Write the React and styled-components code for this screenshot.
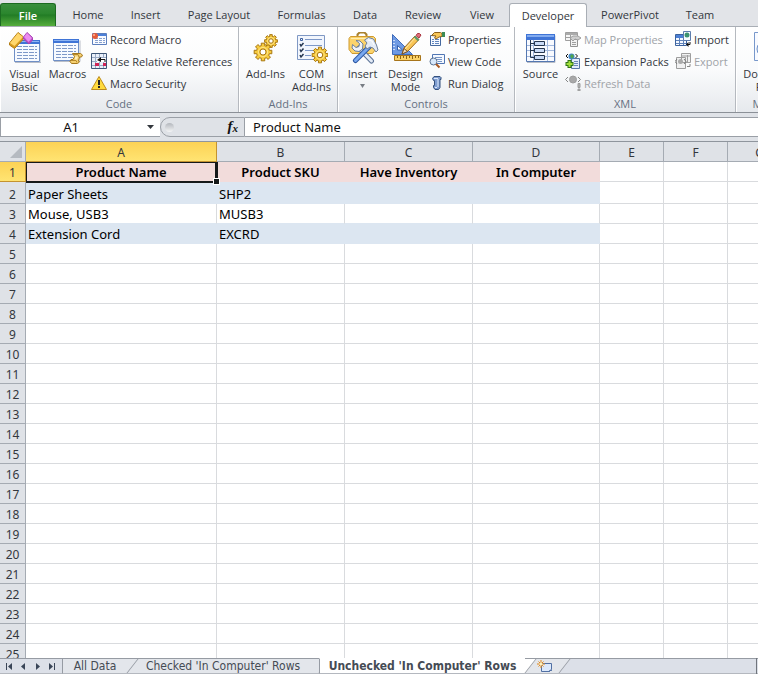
import styled, { createGlobalStyle, css } from "styled-components";

const GlobalStyle = createGlobalStyle`
  * {
    box-sizing: border-box;
  }
  body {
    margin: 0;
    overflow: hidden;
    background: #dfe2e7;
  }
  button,
  input {
    font: inherit;
    color: inherit;
    border: none;
    outline: none;
    padding: 0;
    margin: 0;
    background: transparent;
    border-radius: 0;
  }
`;

const Window = styled.div`
  height: 100vh;
  display: flex;
  flex-direction: column;
  overflow: hidden;
  font-family: "Open Sans", "Noto Sans", sans-serif;
  font-size: 11px;
  color: #33373d;
`;

/* ribbon tabs */

const TabBar = styled.nav`
  flex: none;
  height: 27px;
  display: flex;
  align-items: flex-end;
  background: #e2e4e8;
  border-bottom: 1px solid #a9aeb5;
  white-space: nowrap;
`;

const FileTab = styled.button`
  width: 56px;
  height: 23px;
  margin-right: 3px;
  border: 1px solid #1c6b21;
  border-bottom: none;
  border-radius: 3px 3px 0 0;
  background: linear-gradient(#3a8f3e, #2a862d 45%, #227c25 50%, #55ad3c);
  color: #fff;
  font-weight: 600;
`;

const Tab = styled.button`
  width: ${(props) => props.$width}px;
  height: 23px;
  flex: none;
  text-align: center;
  ${(props) =>
    props.$active &&
    css`
      height: 24px;
      margin-bottom: -1px;
      background: #fff;
      border: 1px solid #a9aeb5;
      border-bottom: none;
      border-radius: 3px 3px 0 0;
    `}
`;

/* ribbon body */

const RibbonBody = styled.div`
  flex: none;
  height: 86px;
  display: flex;
  overflow: hidden;
  background: linear-gradient(#fff, #fafbfc 50%, #e6e9ed);
  border-bottom: 1px solid #8b9097;
`;

const GroupBox = styled.section`
  width: ${(props) => props.$width}px;
  flex: none;
  display: flex;
  flex-direction: column;
  border-right: 1px solid #b5b9bf;
  box-shadow: inset 1px 0 0 #fff;
`;

const GroupItems = styled.div`
  height: 69px;
  padding: 1px 0 0 3px;
  display: flex;
  align-items: flex-start;
`;

const GroupLabel = styled.div`
  line-height: 16px;
  text-align: center;
  color: #667082;
`;

const BigButtonBox = styled.button`
  width: ${(props) => props.$width}px;
  flex: none;
  padding-top: 4px;
  display: flex;
  flex-direction: column;
  align-items: center;
  line-height: 13px;
  white-space: nowrap;

  svg {
    margin-bottom: 3px;
  }
`;

const SmallColumn = styled.div`
  width: ${(props) => props.$width}px;
  flex: none;
  padding-left: 2px;
`;

const SmallButton = styled.button`
  height: 22px;
  display: flex;
  align-items: center;
  gap: 3px;
  white-space: nowrap;

  &:disabled {
    color: #a0a3a8;
  }
  &:disabled svg {
    filter: grayscale(1);
    opacity: 0.7;
  }
`;

/* formula bar */

const FormulaBar = styled.div`
  flex: none;
  height: 29px;
  padding: 4px 0;
  display: flex;
  background: #dfe2e7;
  border-bottom: 1px solid #8f959d;
  font-family: "Noto Sans", sans-serif;
  font-size: 13px;
  color: #111;
`;

const NameBox = styled.div`
  width: 160px;
  flex: none;
  display: flex;
  background: #fff;
  border: 1px solid #9a9fa6;
  border-right: none;
`;

const NameInput = styled.input`
  width: 140px;
  text-align: center;
`;

const NameArrow = styled.button`
  width: 18px;
  display: flex;
  align-items: center;
  justify-content: center;
`;

const FunctionArea = styled.div`
  width: 85px;
  flex: none;
  display: flex;
  align-items: center;
  justify-content: space-between;
  padding: 0 6px 0 4px;
  background: #dfe2e7;
  border: 1px solid #9a9fa6;
  border-radius: 10px 0 0 10px;
`;

const Knob = styled.span`
  width: 9px;
  height: 9px;
  border-radius: 50%;
  background: linear-gradient(#b3b7bd, #f4f5f6);
`;

const FxButton = styled.button`
  font-family: "Liberation Serif", serif;
  font-size: 15px;
  font-style: italic;
  font-weight: bold;
  line-height: 18px;

  sub {
    font-size: 11px;
    vertical-align: -1px;
  }
`;

const FormulaInput = styled.input`
  flex: 1;
  min-width: 0;
  padding-left: 8px;
  background: #fff;
  border: 1px solid #9a9fa6;
  border-width: 1px 0;
`;

/* grid */

const GridArea = styled.main`
  flex: 1;
  min-height: 0;
  overflow: hidden;
  background: #fff;
`;

const Grid = styled.table`
  width: 792px;
  table-layout: fixed;
  border-collapse: separate;
  border-spacing: 0;
  font-family: "Noto Sans", sans-serif;
  font-size: 13px;
  line-height: 17px;
  color: #000;
`;

const Row = styled.tr`
  height: ${(props) => props.$height || 20}px;
`;

const HeadCell = styled.th`
  padding: 0;
  font-size: 12px;
  font-weight: normal;
  text-align: center;
  vertical-align: bottom;
  color: #33373d;
  background: #dfe2e7;
  border-right: 1px solid #a5abb3;
  border-bottom: 1px solid #a5abb3;
  ${(props) =>
    props.$selected &&
    css`
      background: linear-gradient(#fcd255, #ffe472);
      border-color: #c4932f;
    `}
`;

const Corner = styled(HeadCell)`
  svg {
    display: block;
    margin: 0 3px 3px auto;
  }
`;

const Cell = styled.td`
  position: relative;
  padding: 0 2px;
  white-space: nowrap;
  vertical-align: bottom;
  font-weight: ${(props) => (props.$bold ? 600 : 400)};
  text-align: ${(props) => (props.$bold ? "center" : "left")};
  background: ${(props) => props.$fill || "#fff"};
  border-right: 1px solid ${(props) => props.$fill || "#d9dbde"};
  border-bottom: 1px solid ${(props) => props.$line || props.$fill || "#d9dbde"};
`;

const Selection = styled.span`
  position: absolute;
  inset: 0 -2px -2px 0;
  z-index: 1;
  border: 1px solid #15191a;
  border-width: 1px 3px 2px 1px;

  &::after {
    content: "";
    position: absolute;
    right: -4px;
    bottom: -3px;
    width: 5px;
    height: 5px;
    background: #15191a;
    outline: 1px solid #fff;
  }
`;

/* sheet tabs */

const SheetBar = styled.footer`
  position: relative;
  z-index: 0;
  flex: none;
  height: 16px;
  display: flex;
  overflow: hidden;
  background: #dce0e8;
  font-family: "DejaVu Sans Condensed", "DejaVu Sans", sans-serif;
  font-size: 12px;
  color: #454b54;
  box-shadow: inset 0 1px 0 #969ba3, inset 0 -1px 0 #b4b8bf;
`;

const SheetNav = styled.div`
  width: 62px;
  flex: none;
  display: flex;
  align-items: center;
  justify-content: space-between;
  padding: 0 5px;
`;

const NavButton = styled.button`
  display: flex;
`;

const SheetTab = styled.button`
  position: relative;
  z-index: ${(props) => (props.$active ? 4 : props.$level)};
  width: ${(props) => props.$width}px;
  height: 16px;
  flex: none;
  line-height: 15px;
  white-space: nowrap;
  background: ${(props) => (props.$active ? "#fff" : "#e3e6eb")};
  border-left: 1px solid #969ba3;
  border-top: 1px solid ${(props) => (props.$active ? "#fff" : "#969ba3")};
  border-bottom: 1px solid #b4b8bf;
  font-weight: ${(props) => (props.$active ? "bold" : "normal")};
  ${(props) => props.$joined && "border-left: none;"}

  &::after {
    content: "";
    position: absolute;
    z-index: -1;
    top: 0;
    bottom: 0;
    right: -6px;
    width: 16px;
    background: inherit;
    border-right: 1px solid #969ba3;
    transform: skewX(-38deg);
  }
`;

const NewSheetTab = styled(SheetTab)`
  padding-left: 5px;

  svg {
    display: block;
    margin: 0 auto;
  }
`;

const Splitter = styled.span`
  width: 2px;
  margin-left: auto;
  border-left: 1px solid #70757c;
`;

/* icons */

const SheetLines = ({ x, y, w, h, step = 3 }) => {
  const lines = [];
  for (let i = y; i < y + h; i += step) {
    lines.push(`M${x} ${i}h${w}`);
  }
  return <path d={lines.join("")} stroke="#7d98c8" strokeDasharray="5 1" />;
};

// eight-toothed wheel, r is the radius to the tip of a tooth
const Gear = ({ cx, cy, r }) => {
  const inner = r * 0.74;
  const points = [];
  for (let i = 0; i < 8; i++) {
    const a = (i * Math.PI) / 4;
    [
      [a - 0.24, inner],
      [a - 0.2, r],
      [a + 0.2, r],
      [a + 0.24, inner],
    ].forEach(([t, d]) => {
      points.push(`${cx + d * Math.cos(t)},${cy + d * Math.sin(t)}`);
    });
  }
  return (
    <g>
      <polygon
        points={points.join(" ")}
        fill="#f7cb3e"
        stroke="#a8760f"
        strokeLinejoin="round"
      />
      <circle cx={cx} cy={cy} r={r * 0.52} fill="none" stroke="#ffe58a" />
      <circle cx={cx} cy={cy} r={r * 0.34} fill="#fff" stroke="#a8760f" />
    </g>
  );
};

const VisualBasicIcon = () => (
  <svg width="32" height="32" fill="none">
    <path d="M6 30.5h26v-21" stroke="#b9bec8" />
    <path d="M5.5 8.500h25v21h-25z" fill="#f7faff" stroke="#6f8fc6" />
    <path d="M5 8h26v4H5z" fill="#3f74d6" />
    <path d="M6 9h24v1H6z" fill="#8db4f3" />
    <SheetLines x={8} y={14.5} w={20} h={14} />
    <path d="M.5 11 9 .5l5 4v3L5.500 16.500.500 13z" fill="#d99c1c" stroke="#b27c14" />
    <path d="M1 11 9 1l5 4-8.500 9z" fill="#ffd76c" />
    <path d="M14.500 5 18 .5l5.500 5v2.500L20 12l-5.500-5z" fill="#b94cc8" stroke="#a845b5" />
    <path d="M15 5l3-4 5 5-3.500 4z" fill="#eb8df0" />
  </svg>
);

const MacrosIcon = () => (
  <svg width="32" height="32" fill="none">
    <path d="M2 29.500h26v-21" stroke="#b9bec8" />
    <path d="M1.500 7.500h25v21h-25z" fill="#f7faff" stroke="#6f8fc6" />
    <path d="M1 7h26v4H1z" fill="#3f74d6" />
    <path d="M2 8h24v1H2z" fill="#8db4f3" />
    <SheetLines x={4} y={13.500} w={20} h={14} />
    <path
      d="M20.500 21.500h8l2 1.500-1 2h-2l-1 4 1 1-2 1.500h-6l-1.500-2 1-2h2l1.500-3z"
      fill="#f5d071"
      stroke="#a6781c"
    />
    <path d="M21 22.500h5l1 2.500M19 28.500h5l1 2" stroke="#b78a2b" />
    <path d="M23 24.500h3l-1 3h-2z" fill="#fff0bd" />
  </svg>
);

const AddInsIcon = () => (
  <svg width="32" height="32">
    <Gear cx={21} cy={9} r={6.5} />
    <Gear cx={13} cy={20} r={9} />
  </svg>
);

const ComAddInsIcon = () => (
  <svg width="32" height="32" fill="none">
    <path d="M1.500 3.500h27v24h-27z" fill="#f2f6fd" stroke="#7f98c4" />
    <path d="M9 7.500h17M9 13.500h17M9 18.500h10M9 23.500h6" stroke="#7d98c8" />
    <path d="M4.500 6.500h2v2h-2z" stroke="#3b5f9d" />
    <path
      d="m4 12 1 2 2.500-3M4 17.500l1 2 2.500-3M4 23l1 2 2.500-3"
      stroke="#24354f"
      strokeWidth="1.500"
    />
    <Gear cx={24} cy={23} r={8} />
  </svg>
);

const InsertIcon = () => (
  <svg width="32" height="32" fill="none">
    <path d="M10.500 5V2.500l2-2h5l2 2V5" stroke="#a9822f" strokeWidth="2" />
    <path
      d="M3.500 4.500h23l2 2v11l-3 4H5l-3-4v-11z"
      fill="#fbd36b"
      stroke="#cf9a2e"
    />
    <path d="M4 6.500h23" stroke="#ffedb0" />
    <path d="M12 16 24.500 29" stroke="#5a7195" strokeWidth="5" strokeLinecap="round" />
    <path d="M12 16 24.500 29" stroke="#e4ecf7" strokeWidth="3" strokeLinecap="round" />
    <path
      d="M5.500 12.500 9 15.500l3-1 .500-3-3.500-3 4 .5 3 3-.5 5-3.500 2.500-4-.5-3-3z"
      fill="#edf2f9"
      stroke="#6c7f9c"
    />
    <path d="M22 15 8.500 28.500" stroke="#2b57a4" strokeWidth="5" strokeLinecap="round" />
    <path d="M22 15 8.500 28.500" stroke="#79a8ef" strokeWidth="3" strokeLinecap="round" />
    <path
      d="m17.500 8 4-2.500 5 1.500 3 6 1.500 5-2 2-3-4-3-1-3 2-2-3 2-3z"
      fill="#e4ebf5"
      stroke="#6c7e98"
    />
    <path d="m21 8 4 1 2 4" stroke="#fff" />
  </svg>
);

const DesignIcon = () => (
  <svg width="32" height="32" fill="none">
    <path d="M2.500 2.500v20h20z" fill="#6f9ae3" stroke="#3f6cbb" />
    <path d="M7.500 13.500v4.500h5z" fill="#fff" stroke="#3560ad" />
    <path d="M3 8.500h2M3 11.500h2M3 14.500h2M3 17.500h2" stroke="#c9dbfb" />
    <path d="M4.500 23.500h26v5h-26z" fill="#fbd267" stroke="#a8751b" />
    <path
      d="M7.500 24v2M10.500 24v3M13.500 24v2M16.500 24v3M19.500 24v2M22.500 24v3M25.500 24v2M28.500 24v2"
      stroke="#8d6213"
    />
    <path d="m12 22 2-6L25 4l4 3.500L18 19z" fill="#f9c656" stroke="#9a6a20" />
    <path d="m15 17 11-12" stroke="#ffe9a8" />
    <path d="m12 22 2-5.500 3.500 3z" fill="#f6dfb9" stroke="#745028" />
    <path d="m24.500 4.500 4 4" stroke="#5a9a6b" strokeWidth="2" />
    <path d="m26 3.500 1.500-2h2L31 3l-2 3z" fill="#e2707a" stroke="#a9343f" />
  </svg>
);

const SourceIcon = () => (
  <svg width="32" height="32" fill="none">
    <path d="M2 30.500h28v-27" stroke="#b9bec8" />
    <path d="M1.500 2.500h28v27h-28z" fill="#f8faff" stroke="#5477b1" />
    <path d="M1 2h29v6H1z" fill="#3f74d6" />
    <path d="M2 3h27v2H2z" fill="#82abef" />
    <path
      d="M2 13.500h27M2 18.500h27M2 24.500h27M8.500 8v21M22.500 8v21"
      stroke="#a3b9de"
    />
    <path d="M5.500 8v17.500h4M5.500 11.500h4M5.500 18.500h4" stroke="#25364f" />
    <path
      d="M9.500 9.500h10v4h-10zM9.500 16.500h10v4h-10zM9.500 23.500h10v4h-10z"
      fill="#c9daf6"
      stroke="#25364f"
    />
  </svg>
);

const DocumentIcon = () => (
  <svg width="32" height="32" fill="none">
    <path d="M.5.5h28v28H.5z" fill="#f8faff" stroke="#7898cb" />
    <circle cx="11" cy="17" r="8" fill="#dce9fb" stroke="#6b8fc8" />
  </svg>
);

const RecordIcon = () => (
  <svg width="16" height="16" fill="none">
    <path d="M1.500 2.500h14v11h-14z" fill="#f9fbff" stroke="#5c7fbd" />
    <path d="M2 3h13v2H2z" fill="#4d80d8" />
    <path
      d="M4 7.500h10M4 9.500h10M4 11.500h10"
      stroke="#87a1cf"
      strokeDasharray="3 1"
    />
    <circle cx="4" cy="5" r="3" fill="#e55b3a" />
    <circle cx="3" cy="4" r="1" fill="#ffb59b" />
  </svg>
);

const RelativeIcon = () => (
  <svg width="16" height="16" fill="none">
    <path d="M.5.5h15v15H.5z" fill="#eaf0fa" stroke="#3f5777" />
    <path
      d="M1 4.500h14M1 8.500h14M1 12.500h14M4.500 1v14M8.500 1v14M12.500 1v14"
      stroke="#9aabc5"
    />
    <path d="M4 10h4v3H4zM12 10h3v3h-3z" fill="#d02456" />
    <path d="M6 5h9v4H6z" fill="#fff" />
    <path d="M14 9V6.500H9" stroke="#111" />
    <path d="m6 7 4-3v5z" fill="#111" />
  </svg>
);

const WarningIcon = () => (
  <svg width="16" height="16" fill="none">
    <path
      d="M8 1.500 15.500 14.500H.5z"
      fill="#ffda3d"
      stroke="#bd8b1b"
      strokeLinejoin="round"
    />
    <path d="M8 5v5M8 11v2" stroke="#222" strokeWidth="2" />
  </svg>
);

const PropertiesIcon = () => (
  <svg width="16" height="16" fill="none">
    <path d="M1.500 4.500h10v10h-10z" fill="#f5f9ff" stroke="#45699f" />
    <path
      d="M3 8.500h2M6 8.500h4M3 10.500h2M6 10.500h4M3 12.500h2M6 12.500h4"
      stroke="#6186bf"
    />
    <path
      d="m2.500 4.500 3-3h6l1.500 1v3l-3 .5-3 2-1.500-1 1.500-2z"
      fill="#f7c658"
      stroke="#8c601c"
    />
    <path d="M13 1h3v5h-3z" fill="#3c8b55" />
  </svg>
);

const ViewCodeIcon = () => (
  <svg width="16" height="16" fill="none">
    <path d="M3.500 1.500h12v9h-12z" fill="#f5f9ff" stroke="#5076b4" />
    <path d="M6 4.500h7M6 6.500h7M9 8.500h4" stroke="#7896c7" />
    <circle cx="4.500" cy="8.500" r="3.500" fill="#d8e8fb" stroke="#5b7394" />
    <path d="m7 11 3.500 3.500" stroke="#ab5922" strokeWidth="2" />
  </svg>
);

const RunDialogIcon = () => (
  <svg width="16" height="16" fill="none">
    <path
      d="M3.500 3.500 5 1.500h6l1 1v2h-1v8l-1.500 2H6l-1.500-2v-2h1v-5h-1z"
      fill="#7f9dd0"
      stroke="#35517d"
    />
    <path d="M9 4v8M5 3.500h4M6 12.500h2" stroke="#dce8fb" />
  </svg>
);

const MapIcon = () => (
  <svg width="16" height="16" fill="none">
    <path d="M.5 1.500h12v8H.5z" fill="#f4f4f4" stroke="#777" />
    <path d="M1 2h11v2H1z" fill="#888" />
    <path d="M1 6.500h12M5.500 4v5" stroke="#777" />
    <path d="M5.500 8.500h7v7h-7z" fill="#eee" stroke="#666" />
    <path d="M7 11.500h4M7 13.500h4" stroke="#777" />
    <path d="m5 7 3-2h5l3 2-3 2-3-1-2 2z" fill="#bbb" stroke="#777" />
  </svg>
);

const ExpansionIcon = () => (
  <svg width="16" height="16" fill="none">
    <path d="M6.500 5.500h8v10h-8z" fill="#e3ecfb" stroke="#5877a5" />
    <path d="M9 8.500h4M9 10.500h4M9 12.500h4" stroke="#6b87b7" />
    <path d="m3 1-2 2 2 2M10.500 1l2 2-2 2" stroke="#111" />
    <circle cx="6.500" cy="3.500" r="3" fill="#3f86c8" />
    <path d="m5 3 2-2 2 2-2 3z" fill="#52a44c" />
    <path d="M4.500 7v8M.5 11h8" stroke="#2f7416" strokeWidth="4" />
    <path d="M4.500 8v6M1.500 11h6" stroke="#a3e03c" strokeWidth="2" />
  </svg>
);

const RefreshIcon = () => (
  <svg width="16" height="16" fill="none">
    <path d="M3 2 .5 4.500 3 7M13 2l2.500 2.500L13 7" stroke="#555" />
    <circle cx="8" cy="4.500" r="3.500" fill="#888" stroke="#777" />
    <path d="M13 8.500h2v4h-2zM13 14h2v2h-2z" fill="#999" stroke="#777" />
  </svg>
);

const ImportIcon = () => (
  <svg width="16" height="16" fill="none">
    <path d="M.5 3.500h11v11H.5z" fill="#f4f8ff" stroke="#3b629d" />
    <path d="M1 4h10v3H1z" fill="#4b7fd5" />
    <path d="M1 9.500h10M1 12.500h10M4.500 7v7M8.500 7v7" stroke="#5f82b9" />
    <path d="M8.500.5h7v9h-7z" fill="#f8fbff" stroke="#5d7dac" />
    <circle cx="12" cy="4" r="2.500" fill="#3b9270" />
    <path d="M15 11v2.500h-2.500" stroke="#111" />
    <path d="M11 13.500 13.500 11v5z" fill="#111" />
  </svg>
);

const ExportIcon = () => (
  <svg width="16" height="16" fill="none">
    <path d="M6.500.5h9v9h-9zM1.500 4.500h9v11h-9z" fill="#eee" stroke="#777" />
    <path d="M7 3h8M12.500 2v7" stroke="#777" />
    <path d="m2 6-2 2.500L2 11M9 6l2 2.500L9 11" stroke="#444" />
    <circle cx="5.500" cy="8.500" r="2.500" fill="#888" />
    <path d="M15 11v2.500h-3" stroke="#555" />
  </svg>
);

const NewSheetIcon = () => (
  <svg width="16" height="13" fill="none">
    <path d="M4.500 3.500h10v6l-2 2h-8z" fill="#dce9fb" stroke="#506fa3" />
    <path d="m12 12 1-2 2 .5" stroke="#506fa3" />
    <path d="M4 0v8M0 4h8M1.500 1.500l5 5M6.500 1.500l-5 5" stroke="#e18a1d" />
    <circle cx="4" cy="4" r="1.500" fill="#fff2bd" />
  </svg>
);

const ArrowDown = ({ size = 7, color = "#33373d" }) => (
  <svg width={size} height="4">
    <path d={`M0 0h${size}L${size / 2} 4z`} fill={color} />
  </svg>
);

const navPaths = [
  { label: "First sheet", d: "M1 1h1v7H1zM7 1v7L3 4.500z" },
  { label: "Previous sheet", d: "M6 1v7L2 4.500z" },
  { label: "Next sheet", d: "M2 1v7l4-3.500z" },
  { label: "Last sheet", d: "M1 1v7l4-3.500zM6 1h1v7H6z" },
];

function BigButton({ icon, lines, width, arrow }) {
  return (
    <BigButtonBox $width={width}>
      {icon}
      {lines.map((line) => (
        <span key={line}>{line}</span>
      ))}
      {arrow && (
        <span>
          <ArrowDown size={5} color="#777c84" />
        </span>
      )}
    </BigButtonBox>
  );
}

function Group({ label, width, children }) {
  return (
    <GroupBox $width={width} aria-label={label}>
      <GroupItems>{children}</GroupItems>
      <GroupLabel>{label}</GroupLabel>
    </GroupBox>
  );
}

const tabs = [
  { name: "Home", width: 58 },
  { name: "Insert", width: 57 },
  { name: "Page Layout", width: 90 },
  { name: "Formulas", width: 75 },
  { name: "Data", width: 52 },
  { name: "Review", width: 64 },
  { name: "View", width: 54 },
  { name: "Developer", width: 78 },
  { name: "PowerPivot", width: 86 },
  { name: "Team", width: 54 },
];

const columns = [
  { name: "A", width: 191 },
  { name: "B", width: 128 },
  { name: "C", width: 128 },
  { name: "D", width: 127 },
  { name: "E", width: 64 },
  { name: "F", width: 64 },
  { name: "G", width: 64 },
];

const PINK = "#f2dcdb";
const BLUE = "#dce6f1";

const data = {
  1: ["Product Name", "Product SKU", "Have Inventory", "In Computer"],
  2: ["Paper Sheets", "SHP2"],
  3: ["Mouse, USB3", "MUSB3"],
  4: ["Extension Cord", "EXCRD"],
};
const fills = { 1: PINK, 2: BLUE, 4: BLUE };

const rows = Array.from({ length: 25 }, (_, i) => i + 1);

function Ribbon() {
  return (
    <RibbonBody>
      <Group label="Code" width={239}>
        <BigButton icon={<VisualBasicIcon />} lines={["Visual", "Basic"]} width={43} />
        <BigButton icon={<MacrosIcon />} lines={["Macros"]} width={43} />
        <SmallColumn $width={148}>
          <SmallButton><RecordIcon />Record Macro</SmallButton>
          <SmallButton><RelativeIcon />Use Relative References</SmallButton>
          <SmallButton><WarningIcon />Macro Security</SmallButton>
        </SmallColumn>
      </Group>
      <Group label="Add-Ins" width={99}>
        <BigButton icon={<AddInsIcon />} lines={["Add-Ins"]} width={47} />
        <BigButton icon={<ComAddInsIcon />} lines={["COM", "Add-Ins"]} width={45} />
      </Group>
      <Group label="Controls" width={177}>
        <BigButton icon={<InsertIcon />} lines={["Insert"]} width={43} arrow />
        <BigButton icon={<DesignIcon />} lines={["Design", "Mode"]} width={43} />
        <SmallColumn $width={86}>
          <SmallButton><PropertiesIcon />Properties</SmallButton>
          <SmallButton><ViewCodeIcon />View Code</SmallButton>
          <SmallButton><RunDialogIcon />Run Dialog</SmallButton>
        </SmallColumn>
      </Group>
      <Group label="XML" width={221}>
        <BigButton icon={<SourceIcon />} lines={["Source"]} width={45} />
        <SmallColumn $width={110}>
          <SmallButton disabled><MapIcon />Map Properties</SmallButton>
          <SmallButton><ExpansionIcon />Expansion Packs</SmallButton>
          <SmallButton disabled><RefreshIcon />Refresh Data</SmallButton>
        </SmallColumn>
        <SmallColumn $width={60}>
          <SmallButton><ImportIcon />Import</SmallButton>
          <SmallButton disabled><ExportIcon />Export</SmallButton>
        </SmallColumn>
      </Group>
      <Group label="Modify" width={69}>
        <BigButton icon={<DocumentIcon />} lines={["Document", "Panel"]} width={62} />
      </Group>
    </RibbonBody>
  );
}

function Sheet() {
  return (
    <Grid>
      <colgroup>
        <col width="26" />
        {columns.map((col) => (
          <col key={col.name} width={col.width} />
        ))}
      </colgroup>
      <thead>
        <Row>
          <Corner>
            <svg width="12" height="12">
              <path d="M12 0v12H0z" fill="#b5bac1" />
            </svg>
          </Corner>
          {columns.map((col) => (
            <HeadCell key={col.name} scope="col" $selected={col.name === "A"}>
              {col.name}
            </HeadCell>
          ))}
        </Row>
      </thead>
      <tbody>
        {rows.map((row) => (
          <Row key={row} $height={row === 2 ? 22 : 20}>
            <HeadCell scope="row" $selected={row === 1}>
              {row}
            </HeadCell>
            {columns.map((col, i) => (
              <Cell
                key={col.name}
                $bold={row === 1}
                $fill={i < 4 ? fills[row] : undefined}
                $line={row === 3 && i < 4 ? BLUE : undefined}
              >
                {data[row]?.[i]}
                {row === 1 && i === 0 && <Selection />}
              </Cell>
            ))}
          </Row>
        ))}
      </tbody>
    </Grid>
  );
}

export default function App() {
  return (
    <Window>
      <GlobalStyle />
      <TabBar>
        <FileTab>File</FileTab>
        {tabs.map((tab) => (
          <Tab key={tab.name} $width={tab.width} $active={tab.name === "Developer"}>
            {tab.name}
          </Tab>
        ))}
      </TabBar>
      <Ribbon />
      <FormulaBar>
        <NameBox>
          <NameInput aria-label="Name box" defaultValue="A1" />
          <NameArrow aria-label="Named ranges">
            <ArrowDown />
          </NameArrow>
        </NameBox>
        <FunctionArea>
          <Knob />
          <FxButton aria-label="Insert function">
            f<sub>x</sub>
          </FxButton>
        </FunctionArea>
        <FormulaInput aria-label="Formula" defaultValue="Product Name" />
      </FormulaBar>
      <GridArea>
        <Sheet />
      </GridArea>
      <SheetBar>
        <SheetNav>
          {navPaths.map((nav) => (
            <NavButton key={nav.label} aria-label={nav.label}>
              <svg width="9" height="9">
                <path d={nav.d} fill="#3a4658" />
              </svg>
            </NavButton>
          ))}
        </SheetNav>
        <SheetTab $width={65} $level={3}>All Data</SheetTab>
        <SheetTab $width={192} $level={2} $joined>Checked 'In Computer' Rows</SheetTab>
        <SheetTab $width={206} $active>Unchecked 'In Computer' Rows</SheetTab>
        <NewSheetTab $width={34} $level={1} $joined aria-label="Insert worksheet">
          <NewSheetIcon />
        </NewSheetTab>
        <Splitter />
      </SheetBar>
    </Window>
  );
}
